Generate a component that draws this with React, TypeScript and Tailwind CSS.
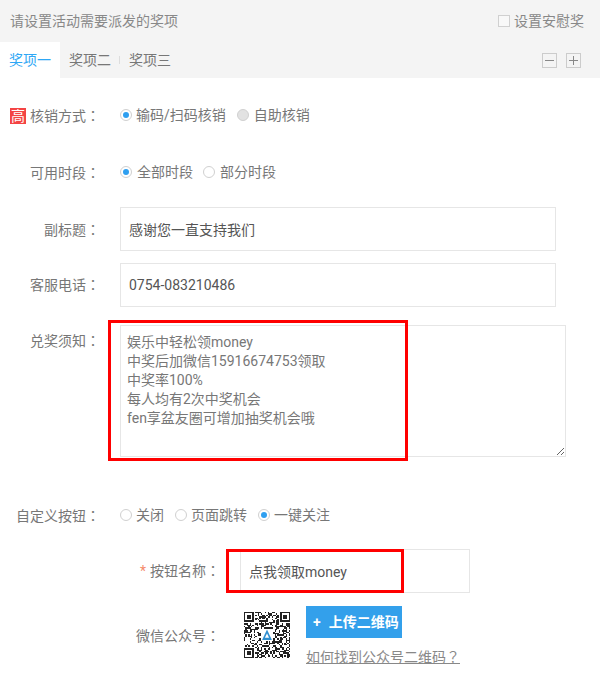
import React from "react";

const FONT = "font-['Roboto','Noto_Sans_CJK_SC',sans-serif]";
const TC = "font-['Noto_Sans_CJK_TC',sans-serif]";

function Radio({ checked, label, tone, gap = "gap-[5px]" }: { checked?: boolean; label: string; tone?: "gray"; gap?: string }) {
  return (
    <span className={`flex items-center ${gap}`}>
      <span
        className={`flex h-3 w-3 items-center justify-center rounded-full border border-[#d0d0d0] ${tone === "gray" ? "bg-[#e2e2e2]" : "bg-white"}`}
      >
        {checked && <span className="h-1.5 w-1.5 rounded-full bg-[#2f9ff0]" />}
      </span>
      <span>{label}</span>
    </span>
  );
}

function Label({ children, w = "w-[100px]" }: { children: React.ReactNode; w?: string }) {
  return <div className={`${w} shrink-0 text-right text-[#777]`}>{children}</div>;
}

function Colon() {
  return <span className={TC}>：</span>;
}

function Qr() {
  const n = 33;
  const cells: React.ReactNode[] = [];
  let seed = 71;
  const rnd = () => {
    seed = (seed * 1103515245 + 12345) & 0x7fffffff;
    return (seed >> 12) % 100;
  };
  const inFinder = (x: number, y: number) =>
    (x < 8 && y < 8) || (x >= n - 8 && y < 8) || (x < 8 && y >= n - 8);
  for (let y = 0; y < n; y++) {
    for (let x = 0; x < n; x++) {
      const v = rnd();
      if (inFinder(x, y)) continue;
      if (x >= 12 && x <= 20 && y >= 12 && y <= 20) continue;
      if (v < 50) cells.push(<rect key={`${x}-${y}`} x={x} y={y} width={1} height={1} fill="#222" />);
    }
  }
  const finder = (x: number, y: number) => (
    <g key={`f${x}${y}`}>
      <rect x={x} y={y} width={7} height={7} fill="#222" />
      <rect x={x + 1} y={y + 1} width={5} height={5} fill="#fff" />
      <rect x={x + 2} y={y + 2} width={3} height={3} fill="#222" />
    </g>
  );
  return (
    <svg viewBox="0 0 33 33" className="h-[46px] w-[46px]" shapeRendering="crispEdges">
      {cells}
      {finder(0, 0)}
      {finder(n - 7, 0)}
      {finder(0, n - 7)}
      <g shapeRendering="auto">
        <path d="M16.5 12.5 L20 20 L13 20 Z" fill="#2f8fd0" />
        <path d="M16.5 15.5 L18 18.5 L15 18.5 Z" fill="#fff" />
      </g>
    </svg>
  );
}

export default function App() {
  return (
    <div className={`relative h-[684px] w-[600px] overflow-hidden bg-white text-sm text-[#777] ${FONT}`}>
      <div className="h-[78px] bg-[#f4f4f4]">
        <div className="flex h-[42px] items-center justify-between pl-[10px] pr-[16px]">
          <span className="text-[#888]">请设置活动需要派发的奖项</span>
          <span className="flex items-center gap-1 text-[#888]">
            <span className="h-3 w-3 border border-[#d0d0d0] bg-[#f8f8f8]" />
            设置安慰奖
          </span>
        </div>
        <div className="flex h-9 items-center">
          <div className="flex h-9 w-[60px] items-center justify-center bg-white text-[#2ea7f5]">奖项一</div>
          <div className="ml-[9px] text-[#777]">奖项二</div>
          <div className="ml-2 mr-[9px] h-2 w-px bg-[#ddd]" />
          <div className="text-[#777]">奖项三</div>
          <div className="ml-auto mr-[19px] flex gap-[9px]">
            <span className="flex h-[15px] w-[15px] items-center justify-center border border-[#ccc]">
              <span className="h-px w-[9px] bg-[#888]" />
            </span>
            <span className="relative flex h-[15px] w-[15px] items-center justify-center border border-[#ccc]">
              <span className="h-px w-[9px] bg-[#888]" />
              <span className="absolute h-[9px] w-px bg-[#888]" />
            </span>
          </div>
        </div>
      </div>

      <div className="mt-[27px] flex h-5 items-center">
        <Label>
          <span className="mr-1 inline-block h-4 w-4 bg-[#f44444] text-center text-sm leading-4 text-white">高</span>
          核销方式<Colon />
        </Label>
        <div className="ml-5 flex gap-[11px]">
          <Radio checked label="输码/扫码核销" gap="gap-1" />
          <Radio tone="gray" label="自助核销" />
        </div>
      </div>

      <div className="mt-[37px] flex h-5 items-center">
        <Label>可用时段<Colon /></Label>
        <div className="ml-5 flex gap-[10px]">
          <Radio checked label="全部时段" />
          <Radio label="部分时段" gap="gap-[5px]" />
        </div>
      </div>

      <div className="mt-[25px] flex">
        <Label w="w-[100px] pt-[12px]">副标题<Colon /></Label>
        <input
          readOnly
          value="感谢您一直支持我们"
          className="ml-5 h-[44px] w-[436px] border border-[#e6e6e6] px-2 text-sm text-[#555] outline-none"
        />
      </div>

      <div className="mt-3 flex">
        <Label w="w-[100px] pt-[11px]">客服电话<Colon /></Label>
        <input
          readOnly
          value="0754-083210486"
          className="ml-5 h-[44px] w-[436px] border border-[#e6e6e6] px-2 text-sm text-[#555] outline-none"
        />
      </div>

      <div className="mt-[18px] flex">
        <Label w="w-[100px] pt-[5px]">兑奖须知<Colon /></Label>
        <textarea
          readOnly
          defaultValue={"娱乐中轻松领money\n中奖后加微信15916674753领取\n中奖率100%\n每人均有2次中奖机会\nfen享盆友圈可增加抽奖机会哦"}
          className="ml-5 block h-[132px] w-[446px] resize border border-[#e6e6e6] px-[6px] pb-[6px] pt-[7px] text-sm leading-[19px] text-[#777] outline-none"
        />
      </div>

      <div className="mt-12 flex h-5 items-center">
        <Label>自定义按钮<Colon /></Label>
        <div className="ml-5 flex gap-[11px]">
          <Radio label="关闭" gap="gap-1" />
          <Radio label="页面跳转" gap="gap-1" />
          <Radio checked label="一键关注" gap="gap-1" />
        </div>
      </div>

      <div className="mt-6 flex">
        <div className="w-[220px] shrink-0 pt-[11px] text-right text-[#777]">
          <span className="mr-1 text-[#f58a6a]">*</span>按钮名称<Colon />
        </div>
        <input
          readOnly
          value="点我领取money"
          className="ml-5 h-[44px] w-[230px] border border-[#e6e6e6] px-2 text-sm text-[#555] outline-none"
        />
      </div>

      <div className="mt-[13px] flex">
        <div className="w-[220px] shrink-0 pt-[19px] text-right text-[#777]">微信公众号<Colon /></div>
        <div className="ml-6 mt-[6px]">
          <Qr />
        </div>
        <div className="ml-4 flex flex-col">
          <div className="flex h-8 w-24 items-center gap-2 bg-[#33a0eb] pl-[7px] font-semibold text-white">
            <span>+</span>
            <span className="whitespace-nowrap">上传二维码</span>
          </div>
          <a className="mt-2 text-[#888] underline">如何找到公众号二维码<span className={TC}>？</span></a>
        </div>
      </div>

      <div className="pointer-events-none absolute left-[108px] top-[320px] h-[141px] w-[300px] border-[3px] border-[#f00]" />
      <div className="pointer-events-none absolute left-[226px] top-[549px] h-[44px] w-[178px] border-[3px] border-[#f00]" />
    </div>
  );
}
